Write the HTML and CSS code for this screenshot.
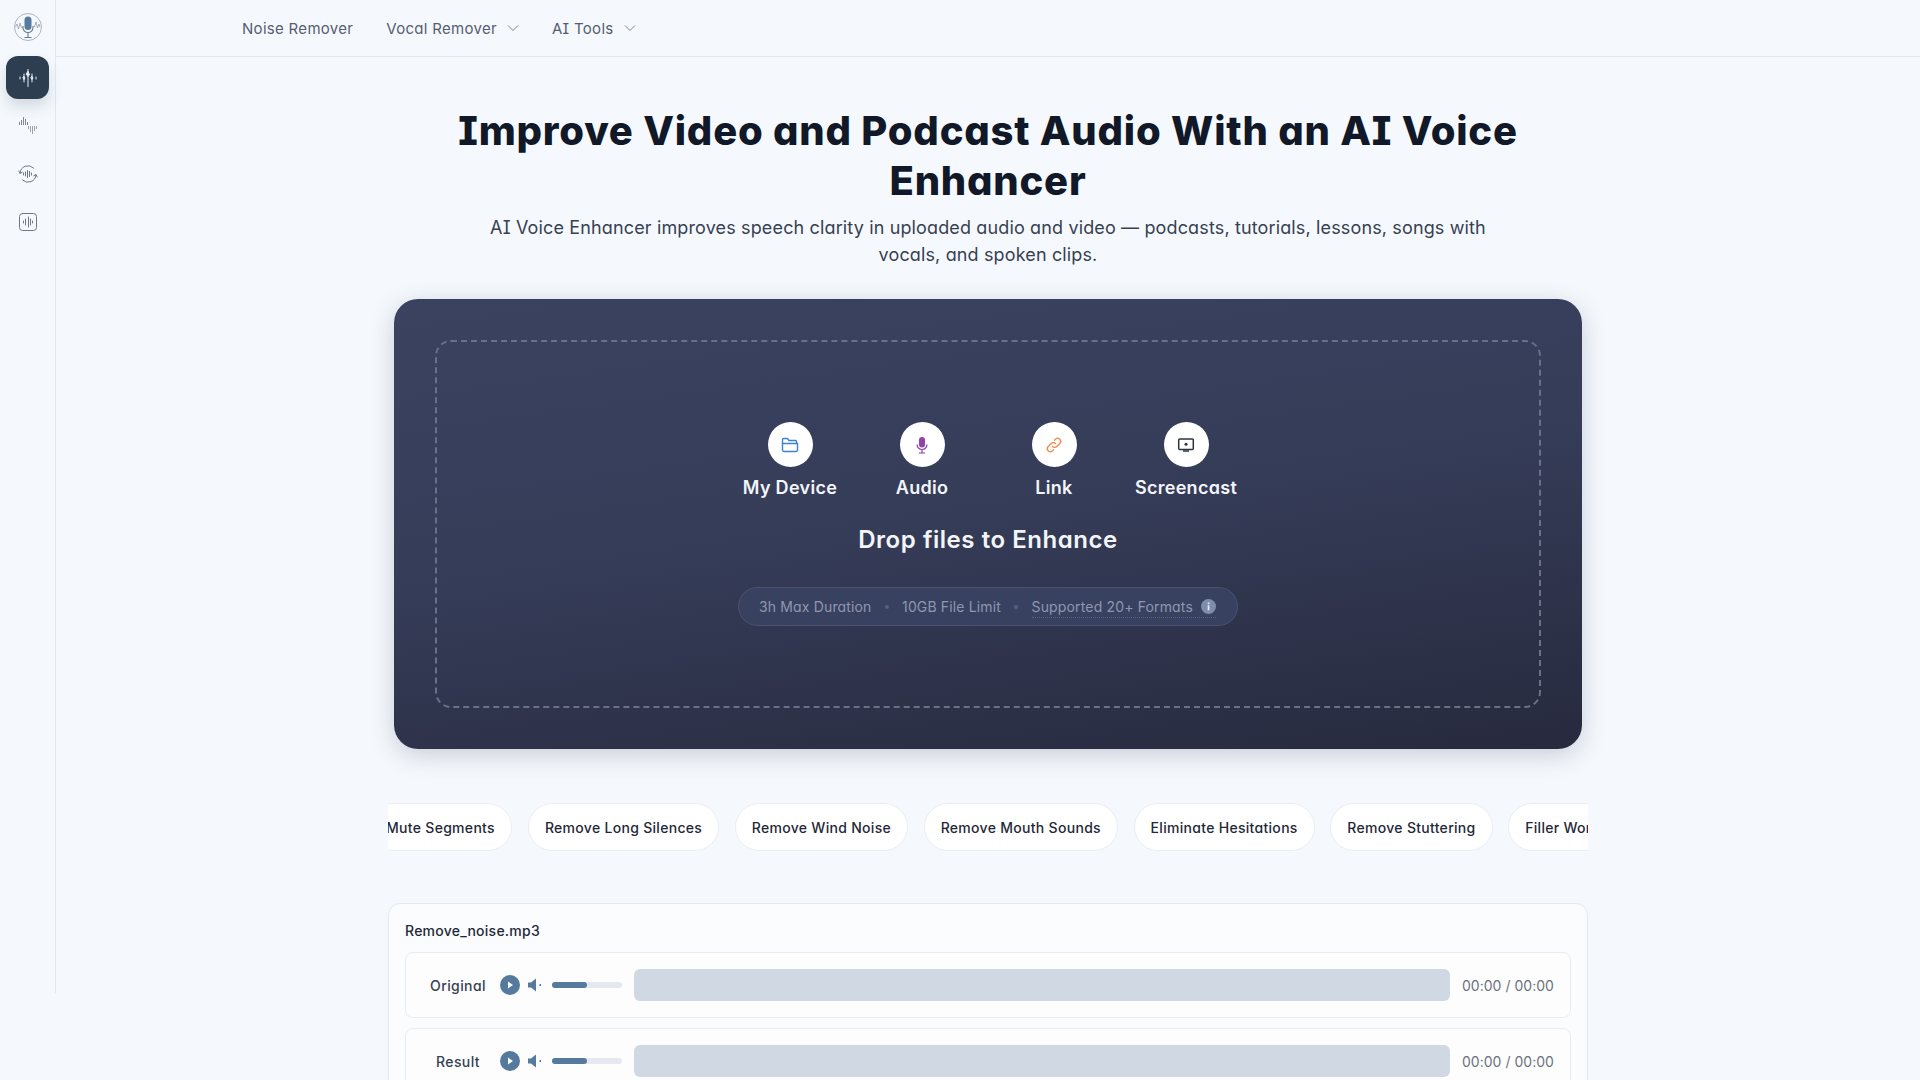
FILE: index.html
```html
<!DOCTYPE html>
<html>
	<head>
		<meta charset="UTF-8" />
		<title>AI Voice Enhancer</title>
		<link rel="stylesheet" href="styles.css">
	</head>
	<body>
		<div class="shell">
			<aside class="sidebar">
				<a class="logo">
					<svg width="30" height="30" viewBox="0 0 30 30" fill="none">
						<circle cx="15" cy="15" r="13.5" stroke="#aab5c2" stroke-width="1"/>
						<rect x="11.500" y="4.500" width="7" height="13.500" rx="3.500" fill="#557a9e"/>
						<path d="M10 14v1.500a5 5 0 0 0 10 0V14M15 20.500V25M11.500 25.500h7" stroke="#6b7a8a" stroke-width="1.100"/>
						<path d="M2.500 15l1.500-3 1.500 5 1.500-6 1.500 5 1 -1M20.500 14l1 1 1.500-5 1.500 6 1.500-4 1 3" stroke="#8796a6" stroke-width=".7"/>
					</svg>
				</a>
				<a class="side-btn active">
					<svg width="20" height="20" viewBox="0 0 20 20" fill="none" stroke="#e6edf4" stroke-width="1" stroke-linecap="round">
						<path d="M2 9v2M6 6v8M10 1.500v17M14 6v8M18 9v2"/>
						<path d="M10 3.500l1.500 3-1.500 2-1.500-2zM6 8.500l1 1.500-1 1.500-1-1.500zM14 8.500l1 1.500-1 1.500-1-1.500z" fill="#e6edf4"/>
					</svg>
				</a>
				<a class="side-btn">
					<svg width="20" height="20" viewBox="0 0 20 20" fill="none" stroke="#7d8894" stroke-width="1">
						<path d="M1.500 7v3M3.500 5v5M5.500 2v8M7.500 4v6M9.500 7v3"/>
						<path d="M10.500 11v3M12.500 11v6M14.500 11v8M16.500 11v5M18.500 11v3" stroke="#9aa4af"/>
					</svg>
				</a>
				<a class="side-btn">
					<svg width="20" height="20" viewBox="0 0 20 20" fill="none" stroke="#6d7884" stroke-width="1" stroke-linecap="round">
						<path d="M2 9A8 8 0 0 1 15.500 4M18 11A8 8 0 0 1 4.500 16"/>
						<path d="M.8 7l1.200 2.500 2.300-1.300M19.200 13L18 10.500l-2.300 1.300"/>
						<path d="M5.500 9v2M7.500 8v4M9.500 6.500v7M11.500 7.500v5M13.500 9v2"/>
					</svg>
				</a>
				<a class="side-btn">
					<svg width="20" height="20" viewBox="0 0 20 20" fill="none" stroke="#6d7884" stroke-width="1" stroke-linecap="round">
						<rect x="1.500" y="1.500" width="17" height="17" rx="3"/>
						<path d="M5.500 9v2M7.500 7v6M10.500 5v10M12.500 7v6M14.500 9v2"/>
					</svg>
				</a>
			</aside>
			<div class="page">
				<header class="topbar">
					<nav class="nav">
						<a>Noise Remover</a>
						<a>Vocal Remover
							<svg width="12" height="12" viewBox="0 0 12 12" fill="none" stroke="#7b8494" stroke-width="1"><path d="M1 3.500l5 5 5-5"/></svg>
						</a>
						<a>AI Tools
							<svg width="12" height="12" viewBox="0 0 12 12" fill="none" stroke="#7b8494" stroke-width="1"><path d="M1 3.500l5 5 5-5"/></svg>
						</a>
					</nav>
				</header>
				<main class="main">
					<h1>Improve Video and Podcast Audio With an AI Voice Enhancer</h1>
					<p class="lead">AI Voice Enhancer improves speech clarity in uploaded audio and video — podcasts, tutorials, lessons, songs with vocals, and spoken clips.</p>

					<section class="upload-card">
						<div class="dropzone">
							<div class="sources">
								<div class="source">
									<span class="source-icon">
										<svg width="18" height="18" viewBox="0 0 18 18" fill="none" stroke="#3b82d6" stroke-width="1.400" stroke-linejoin="round">
											<path d="M1.500 8V3.500a1 1 0 0 1 1-1h4l1.500 2h6.500a1 1 0 0 1 1 1V8"/>
											<path d="M1.500 7.500h15v6.500a1.500 1.500 0 0 1-1.500 1.500H3A1.500 1.500 0 0 1 1.500 14z"/>
										</svg>
									</span>
									My Device
								</div>
								<div class="source">
									<span class="source-icon">
										<svg width="18" height="18" viewBox="0 0 18 18" fill="none">
											<rect x="6" y="1" width="6" height="10.500" rx="3" fill="#8e44ad"/>
											<path d="M4 8.500a5 5 0 0 0 10 0M9 13.500V17M6 17h6" stroke="#8e44ad" stroke-width="1.200"/>
										</svg>
									</span>
									Audio
								</div>
								<div class="source">
									<span class="source-icon">
										<svg width="18" height="18" viewBox="0 0 18 18" fill="none" stroke="#f08a4b" stroke-width="1.300" stroke-linecap="round">
											<path d="M7.500 10.500a3 3 0 0 0 4.300 0l3-3a3 3 0 0 0-4.300-4.300l-1 1"/>
											<path d="M10.500 7.500a3 3 0 0 0-4.300 0l-3 3a3 3 0 0 0 4.300 4.300l1-1"/>
										</svg>
									</span>
									Link
								</div>
								<div class="source">
									<span class="source-icon">
										<svg width="18" height="18" viewBox="0 0 18 18" fill="none">
											<rect x="1.700" y="3" width="14.600" height="10.500" rx="1" stroke="#2c3442" stroke-width="1.500"/>
											<circle cx="9" cy="8.200" r="1.500" fill="#2c3442"/>
											<path d="M6 15h6" stroke="#2c3442" stroke-width="1.500"/>
										</svg>
									</span>
									Screencast
								</div>
							</div>
							<h2>Drop files to Enhance</h2>
							<div class="limits">
								<span>3h Max Duration</span>
								<i class="dot"></i>
								<span>10GB File Limit</span>
								<i class="dot"></i>
								<span class="formats">Supported 20+ Formats
									<svg width="15" height="15" viewBox="0 0 15 15"><circle cx="7.500" cy="7.500" r="7.500" fill="#7f8dac"/><rect x="6.700" y="6.300" width="1.700" height="5" fill="#e8ecf4"/><rect x="6.700" y="3.500" width="1.700" height="1.700" fill="#e8ecf4"/></svg>
								</span>
							</div>
						</div>
					</section>

					<div class="chip-strip">
						<div class="chip-track">
							<a class="chip">Mute Segments</a>
							<a class="chip">Remove Long Silences</a>
							<a class="chip">Remove Wind Noise</a>
							<a class="chip">Remove Mouth Sounds</a>
							<a class="chip">Eliminate Hesitations</a>
							<a class="chip">Remove Stuttering</a>
							<a class="chip">Filler Words</a>
						</div>
					</div>

					<section class="demo">
						<div class="demo-title">Remove_noise.mp3</div>
						<div class="player">
							<span class="player-label">Original</span>
							<svg class="play" width="20" height="20" viewBox="0 0 20 20"><circle cx="10" cy="10" r="10" fill="#557a9e"/><path d="M8 6.500l5 3.500-5 3.500z" fill="#fff"/></svg>
							<svg class="speaker" width="14" height="14" viewBox="0 0 14 14" fill="#557a9e"><path d="M0 4.500h3L8 .5v13l-5-4H0z"/><rect x="11.500" y="6" width="1.500" height="2"/></svg>
							<span class="volume"><span class="volume-fill"></span></span>
							<span class="wave"></span>
							<span class="time">00:00 / 00:00</span>
						</div>
						<div class="player">
							<span class="player-label">Result</span>
							<svg class="play" width="20" height="20" viewBox="0 0 20 20"><circle cx="10" cy="10" r="10" fill="#557a9e"/><path d="M8 6.500l5 3.500-5 3.500z" fill="#fff"/></svg>
							<svg class="speaker" width="14" height="14" viewBox="0 0 14 14" fill="#557a9e"><path d="M0 4.500h3L8 .5v13l-5-4H0z"/><rect x="11.500" y="6" width="1.500" height="2"/></svg>
							<span class="volume"><span class="volume-fill"></span></span>
							<span class="wave"></span>
							<span class="time">00:00 / 00:00</span>
						</div>
					</section>
				</main>
			</div>
		</div>
	</body>
</html>
```

FILE: styles.css
```css
* {
	box-sizing: border-box;
}
html, body {
	margin: 0;
	height: 100%;
	overflow: hidden;
}
body {
	background-color: #f5f9fd;
	color: #111827;
	font-family: Inter, 'Open Sans', sans-serif;
	font-feature-settings: "cv11", "cv08";
}
.shell {
	display: flex;
	align-items: flex-start;
}
.sidebar {
	flex: 0 0 56px;
	height: 993px;
	border-right: 1px solid #e2e8f0;
	display: flex;
	flex-direction: column;
	align-items: center;
}
.logo {
	height: 56px;
	display: flex;
	align-items: center;
	justify-content: center;
}
.logo svg {
	margin-top: -2px;
}
.side-btn {
	width: 43px;
	height: 48px;
	display: flex;
	align-items: center;
	justify-content: center;
}
.side-btn svg {
	margin-left: 1px;
}
.side-btn.active {
	height: 43px;
	margin-bottom: 5px;
	background-color: #2c3e50;
	border-radius: 12px;
	box-shadow: 0 8px 14px rgba(44, 62, 80, 0.16);
}
.side-btn:nth-child(3) {
	margin-top: -3px;
	margin-bottom: 1px;
}
.page {
	flex: 1;
	min-width: 0;
}
.topbar {
	height: 57px;
	border-bottom: 1px solid #e2e8f0;
	padding-left: 186px;
	display: flex;
	align-items: center;
}
.nav {
	display: flex;
	gap: 33px;
	font-size: 15px;
	letter-spacing: 0.3px;
	color: #565d72;
}
.nav a {
	display: flex;
	align-items: center;
	gap: 10px;
}
.main {
	display: flex;
	flex-direction: column;
	align-items: center;
	padding-top: 49px;
}
h1 {
	margin: 0;
	max-width: 1200px;
	font-size: 40px;
	line-height: 50px;
	font-weight: 800;
	letter-spacing: 0.78px;
	text-align: center;
}
.lead {
	margin: 8px 0 0;
	width: 1010px;
	font-size: 18px;
	line-height: 27px;
	letter-spacing: 0.14px;
	text-align: center;
	color: #374151;
}
.upload-card {
	margin-top: 31px;
	width: 1188px;
	height: 450px;
	padding: 41px;
	border-radius: 24px;
	background: linear-gradient(172deg, #3a4260 0%, #363d59 45%, #272a3e 100%);
	box-shadow: 0 6px 24px rgba(59, 67, 96, 0.24);
}
.dropzone {
	height: 100%;
	border: 2px dashed #6a7088;
	border-radius: 16px;
	display: flex;
	flex-direction: column;
	align-items: center;
	justify-content: center;
	color: #f3f5f9;
}
.sources {
	display: flex;
}
.source {
	width: 132px;
	display: flex;
	flex-direction: column;
	align-items: center;
	gap: 8px;
	font-size: 18px;
	line-height: 26px;
	font-weight: 600;
	letter-spacing: 0.3px;
	white-space: nowrap;
}
.source-icon {
	width: 45px;
	height: 45px;
	border-radius: 50%;
	background-color: #fff;
	display: flex;
	align-items: center;
	justify-content: center;
}
h2 {
	margin: 23px 0 0;
	font-size: 24px;
	line-height: 32px;
	font-weight: 600;
	letter-spacing: 0.55px;
}
.limits {
	margin-top: 31px;
	height: 39px;
	width: 500px;
	padding: 0 21px 0 20px;
	display: flex;
	align-items: center;
	justify-content: space-between;
	border: 1px solid #4a526f;
	border-radius: 20px;
	background-color: #394160;
	font-size: 14px;
	letter-spacing: 0.15px;
	color: #8f97ae;
	white-space: nowrap;
}
.dot {
	width: 4px;
	height: 4px;
	border-radius: 50%;
	background-color: #566082;
}
.formats {
	display: flex;
	align-items: center;
	gap: 8px;
	border-bottom: 1px dotted #566080;
	padding: 2px 0;
}
.chip-strip {
	margin-top: 54px;
	width: 1200px;
	overflow: hidden;
}
.chip-track {
	display: flex;
	gap: 16px;
	margin-left: -19px;
}
.chip {
	flex: none;
	height: 48px;
	padding: 0 16px;
	display: flex;
	align-items: center;
	background-color: #fff;
	border: 1px solid #eaeef3;
	border-radius: 24px;
	font-size: 14px;
	font-weight: 500;
	letter-spacing: 0.3px;
	color: #1f2937;
	white-space: nowrap;
}
.chip:nth-child(n+3) {
	margin-left: -0.4px;
}
.demo {
	margin-top: 52px;
	width: 1200px;
	padding: 16px;
	background-color: #fbfcfe;
	border: 1px solid #e5e9ef;
	border-radius: 12px;
}
.demo-title {
	margin-top: 1px;
	margin-bottom: 11px;
	font-size: 14px;
	line-height: 20px;
	font-weight: 500;
	letter-spacing: 0.25px;
	color: #1f2937;
}
.player {
	height: 66px;
	margin-bottom: 10px;
	padding: 0 16px 0 0;
	display: flex;
	align-items: center;
	background-color: #fdfdfe;
	border: 1px solid #e9edf2;
	border-radius: 8px;
}
.player-label {
	width: 94px;
	padding-left: 10px;
	text-align: center;
	font-size: 14px;
	font-weight: 500;
	letter-spacing: 0.4px;
	color: #374151;
}
.play {
	flex: none;
}
.speaker {
	flex: none;
	margin-left: 8px;
}
.volume {
	flex: none;
	margin-left: 10px;
	width: 70px;
	height: 6px;
	border-radius: 3px;
	background-color: #e5e9ef;
}
.volume-fill {
	display: block;
	width: 35px;
	height: 100%;
	border-radius: 3px;
	background-color: #557a9e;
}
.wave {
	flex: 1;
	margin-left: 12px;
	height: 32px;
	border-radius: 6px;
	background-color: #d0d9e3;
}
.time {
	flex: none;
	margin-left: 12px;
	font-size: 14px;
	letter-spacing: 0.03px;
	color: #6b7280;
}
```
